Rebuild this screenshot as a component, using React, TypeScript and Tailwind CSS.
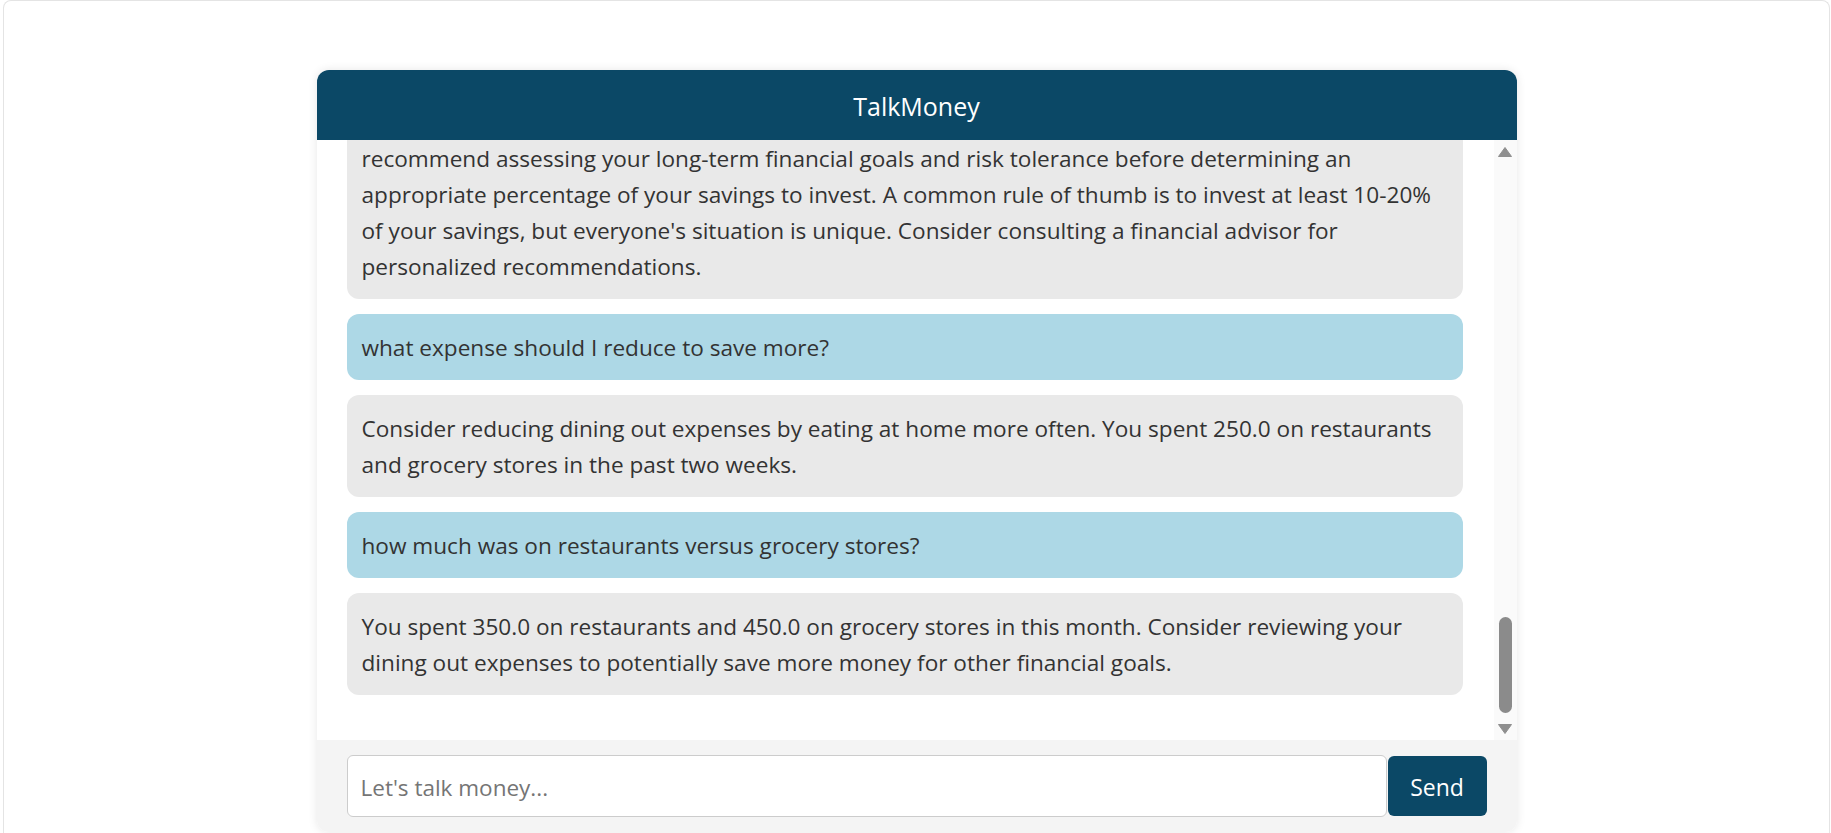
import React from "react";

type Msg = { role: "bot" | "user"; lines: string[]; clipped?: boolean };

const messages: Msg[] = [
  {
    role: "bot",
    clipped: true,
    lines: [
      "recommend assessing your long-term financial goals and risk tolerance before determining an",
      "appropriate percentage of your savings to invest. A common rule of thumb is to invest at least 10-20%",
      "of your savings, but everyone's situation is unique. Consider consulting a financial advisor for",
      "personalized recommendations.",
    ],
  },
  { role: "user", lines: ["what expense should I reduce to save more?"] },
  {
    role: "bot",
    lines: [
      "Consider reducing dining out expenses by eating at home more often. You spent 250.0 on restaurants",
      "and grocery stores in the past two weeks.",
    ],
  },
  { role: "user", lines: ["how much was on restaurants versus grocery stores?"] },
  {
    role: "bot",
    lines: [
      "You spent 350.0 on restaurants and 450.0 on grocery stores in this month. Consider reviewing your",
      "dining out expenses to potentially save more money for other financial goals.",
    ],
  },
];

function Bubble({ m }: { m: Msg }) {
  const color = m.role === "user" ? "bg-[#add8e6]" : "bg-[#e9e9e9]";
  const pad = m.clipped ? "pt-[66px] pb-[14px]" : "pt-[16px] pb-[14px]";
  return (
    <div
      className={`shrink-0 rounded-[12px] ${color} ${pad} px-[15px] text-[22.6px] leading-[36px] text-[#333] whitespace-nowrap`}
    >
      {m.lines.map((l, i) => (
        <React.Fragment key={i}>
          {i > 0 && <br />}
          {l}
        </React.Fragment>
      ))}
    </div>
  );
}

export default function App() {
  return (
    <div className="h-[833px] w-full overflow-hidden bg-white pl-[3px] pr-px font-['Open_Sans','Noto_Sans',sans-serif]">
      <div className="h-[860px] rounded-t-[8px] border-x border-t border-[#e4e4e4] bg-white">
        <div className="mx-auto mt-[69px] flex h-[762px] w-[1200px] flex-col overflow-hidden rounded-[12px] bg-white shadow-[0_0_10px_rgba(0,0,0,0.1)]">
          <div className="flex h-[70px] shrink-0 items-center justify-center bg-[#0b4866] pt-[3px] text-[25px] text-white">
            TalkMoney
          </div>
          <div className="flex h-[600px] shrink-0">
            <div className="flex flex-1 flex-col justify-end gap-[15px] overflow-hidden pl-[30px] pr-[31px] pb-[45px]">
              {messages.map((m, i) => (
                <Bubble key={i} m={m} />
              ))}
            </div>
            <div className="flex w-[23px] shrink-0 flex-col items-center bg-[#fafafa] pt-[7px] pb-[6px]">
              <svg width="14" height="10" viewBox="0 0 14 10">
                <path d="M7 0.5 L13.5 9.5 L0.5 9.5 Z" fill="#8f8f8f" stroke="#8f8f8f" strokeLinejoin="round" />
              </svg>
              <div className="flex-1" />
              <div className="h-[96px] w-[13px] rounded-full bg-[#8b8b8b]" />
              <div className="h-[11px]" />
              <svg width="14" height="10" viewBox="0 0 14 10">
                <path d="M0.5 0.5 L13.5 0.5 L7 9.5 Z" fill="#8f8f8f" stroke="#8f8f8f" strokeLinejoin="round" />
              </svg>
            </div>
          </div>
          <div className="flex flex-1 items-center bg-[#f4f4f4] px-[30px]">
            <input
              type="text"
              placeholder="Let's talk money..."
              className="h-[62px] min-w-0 flex-1 rounded-[6px] border border-[#cccccc] bg-white px-[13px] pt-[2px] text-[22.5px] text-[#333] outline-none placeholder:text-[#757575]"
            />
            <button className="ml-px h-[60px] w-[99px] rounded-[6px] bg-[#0b4866] pt-[2px] text-[23px] text-white">
              Send
            </button>
          </div>
        </div>
      </div>
    </div>
  );
}
